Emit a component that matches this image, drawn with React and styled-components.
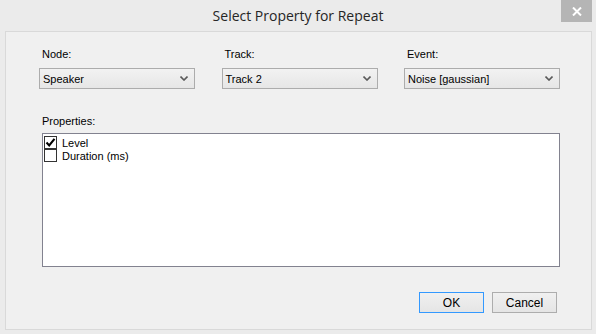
import styled, { createGlobalStyle } from 'styled-components';

const GlobalStyle = createGlobalStyle`
  html, body {
    margin: 0;
    padding: 0;
    background: #ebebeb;
  }
  body {
    font-family: "Liberation Sans", Arial, sans-serif;
  }
`;

const fields = [
  { label: 'Node:', value: 'Speaker' },
  { label: 'Track:', value: 'Track 2' },
  { label: 'Event:', value: 'Noise [gaussian]' },
];

const properties = [
  { name: 'Level', checked: true },
  { name: 'Duration (ms)', checked: false },
];

function Chevron() {
  return (
    <svg width="8" height="5" viewBox="0 0 8 5">
      <path d="M0.5 0.5 L4 4 L7.5 0.5" fill="none" stroke="#5a5a5a" strokeWidth="1.6" />
    </svg>
  );
}

function Check() {
  return (
    <svg width="11" height="11" viewBox="0 0 11 11">
      <path d="M1.5 5.5 L4.2 8.4 L9.5 1.8" fill="none" stroke="#000" strokeWidth="2.1" />
    </svg>
  );
}

export default function App() {
  return (
    <Window>
      <GlobalStyle />
      <TitleBar>
        <span />
        <Title>Select Property for Repeat</Title>
        <CloseButton>
          <svg width="10" height="9" viewBox="0 0 10 9">
            <path d="M1 0.5 L9 8.5 M9 0.5 L1 8.5" stroke="#fff" strokeWidth="2" />
          </svg>
        </CloseButton>
      </TitleBar>
      <Panel>
        <FieldRow>
          {fields.map((f) => (
            <Field key={f.label}>
              <Label>{f.label}</Label>
              <Combo>
                <span>{f.value}</span>
                <Chevron />
              </Combo>
            </Field>
          ))}
        </FieldRow>
        <Label>Properties:</Label>
        <ListBox>
          {properties.map((p) => (
            <ListItem key={p.name}>
              <CheckBox>{p.checked && <Check />}</CheckBox>
              <span>{p.name}</span>
            </ListItem>
          ))}
        </ListBox>
        <ButtonRow>
          <Button $primary>OK</Button>
          <Button>Cancel</Button>
        </ButtonRow>
      </Panel>
    </Window>
  );
}

const Window = styled.div`
  width: 596px;
  height: 334px;
  box-sizing: border-box;
  display: flex;
  flex-direction: column;
  background: #ebebeb;
`;

const TitleBar = styled.div`
  height: 31px;
  display: grid;
  grid-template-columns: 1fr auto 1fr;
  align-items: start;
`;

const Title = styled.div`
  font-family: "Open Sans", "Liberation Sans", sans-serif;
  font-size: 14px;
  color: #262626;
  line-height: 20px;
  padding-top: 6px;
`;

const CloseButton = styled.div`
  justify-self: end;
  margin-right: 4px;
  width: 31px;
  height: 22px;
  background: #b5b5b5;
  display: flex;
  align-items: center;
  justify-content: center;
`;

const Panel = styled.div`
  flex: 1;
  margin: 0 4px 4px 5px;
  border: 1px solid #d9d9d9;
  background: #f0f0f0;
  padding: 16px 0 0 36px;
  display: flex;
  flex-direction: column;
  font-size: 11px;
  color: #000;
`;

const FieldRow = styled.div`
  display: grid;
  grid-template-columns: repeat(3, 156px);
  column-gap: 26.5px;
  margin-left: -3px;
  margin-bottom: 26px;
`;

const Field = styled.div`
  display: flex;
  flex-direction: column;
`;

const Label = styled.div`
  font-size: 11px;
  line-height: 13px;
  margin-bottom: 5px;
  ${Field} & {
    padding-left: 3px;
    margin-bottom: 7px;
  }
`;

const Combo = styled.div`
  height: 21px;
  box-sizing: border-box;
  border: 1px solid #acacac;
  background: linear-gradient(#f2f2f2, #e6e6e6);
  display: flex;
  align-items: center;
  justify-content: space-between;
  padding: 0 6px 0 3px;
  font-size: 11px;
`;

const ListBox = styled.div`
  width: 518px;
  height: 134px;
  box-sizing: border-box;
  border: 1px solid #82828f;
  background: #fff;
  padding: 2px 0 0 1px;
`;

const ListItem = styled.div`
  display: flex;
  align-items: center;
  height: 13px;
  gap: 5px;
  font-size: 11px;
`;

const CheckBox = styled.div`
  width: 13px;
  height: 13px;
  box-sizing: border-box;
  border: 1px solid #333;
  background: #fff;
  display: flex;
  align-items: center;
  justify-content: center;
`;

const ButtonRow = styled.div`
  display: flex;
  justify-content: flex-end;
  gap: 8px;
  margin-top: 25px;
  margin-right: 34px;
`;

const Button = styled.div`
  width: 65px;
  height: 21px;
  box-sizing: border-box;
  border: 1px solid ${(p) => (p.$primary ? '#3399ff' : '#adadad')};
  background: linear-gradient(#f0f0f0, #e5e5e5);
  display: flex;
  align-items: center;
  justify-content: center;
  font-size: 12px;
`;
